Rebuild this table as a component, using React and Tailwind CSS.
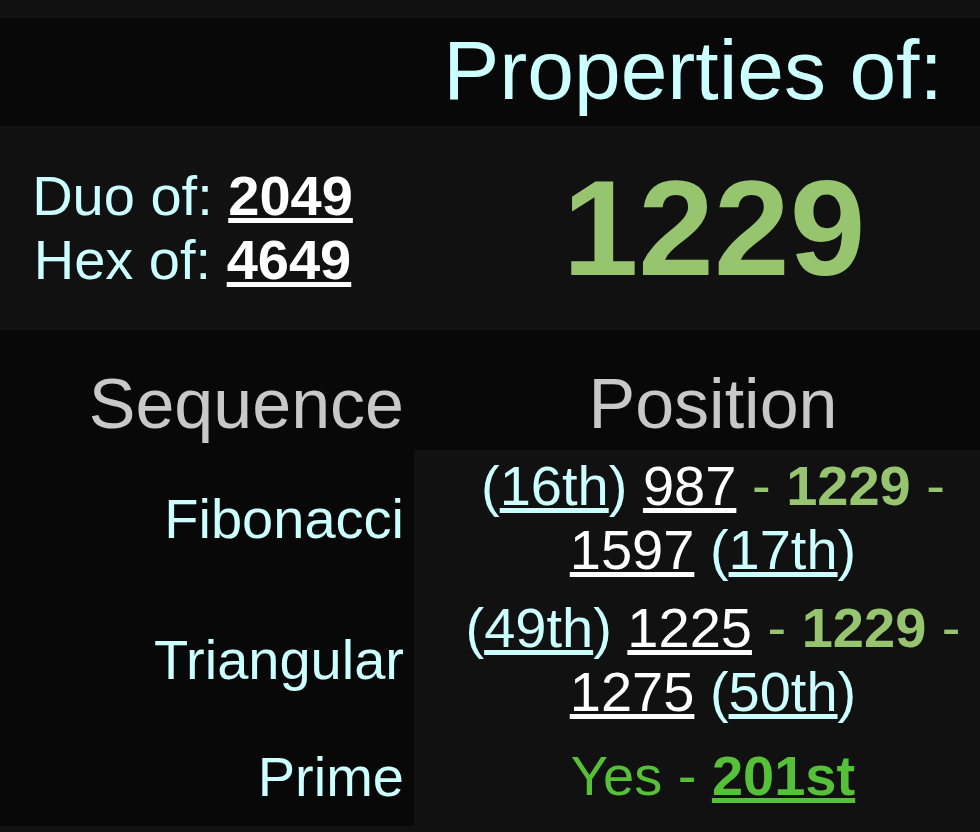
import React from "react";

const cyan = "text-[#ccffff]";
const green = "text-[#97c46f]";

function Pos({ n }) {
  return (
    <span className={cyan}>
      (<span className="underline">{n}</span>)
    </span>
  );
}

function Neighbour({ before, beforePos, after, afterPos }) {
  return (
    <>
      <Pos n={beforePos} /> <span className="text-white underline">{before}</span>{" "}
      <span className={green}>
        - <b>1229</b> -
      </span>{" "}
      <span className="text-white underline">{after}</span> <Pos n={afterPos} />
    </>
  );
}

export default function App() {
  return (
    <div className="min-h-screen bg-[#111] pt-[18px] font-['Liberation_Sans',Arial,sans-serif]">
      {/* title */}
      <div className="flex h-[108px] bg-[#080808]">
        <div className="w-[414px]" />
        <div className="flex-1 pt-[4px] pr-[8px] text-center text-[84px] leading-[96px] text-[#ccffff]">
          Properties of:
        </div>
      </div>

      {/* number */}
      <div className="flex h-[204px] items-center bg-[#111]">
        <div className="w-[385px] text-center text-[56px] leading-[64px] text-[#ccffff]">
          <div>
            Duo of: <b className="text-white underline">2049</b>
          </div>
          <div>
            Hex of: <b className="text-white underline">4649</b>
          </div>
        </div>
        <div className="flex-1 pl-[63px] text-center text-[136px] font-bold leading-[160px] text-[#97c46f]">
          1229
        </div>
      </div>

      {/* table head */}
      <div className="flex h-[120px] bg-[#080808] text-[70px] leading-[80px] text-[#c8c8c8]">
        <div className="w-[414px] pt-[34px] pr-[10px] text-right">Sequence</div>
        <div className="flex-1 pt-[34px] pl-[32px] text-center">Position</div>
      </div>

      {/* rows */}
      <div className="text-[56px] leading-[64px]">
        <div className="flex">
          <div className="flex w-[414px] items-center justify-end bg-[#080808] pr-[10px] text-[#ccffff]">
            Fibonacci
          </div>
          <div className="flex-1 bg-[#111] pt-[4px] pb-[5px] pl-[32px] text-center">
            <Neighbour before="987" beforePos="16th" after="1597" afterPos="17th" />
          </div>
        </div>
        <div className="flex">
          <div className="flex w-[414px] items-center justify-end bg-[#080808] pr-[10px] text-[#ccffff]">
            Triangular
          </div>
          <div className="flex-1 bg-[#111] pt-[9px] pb-[8px] pl-[32px] text-center">
            <Neighbour before="1225" beforePos="49th" after="1275" afterPos="50th" />
          </div>
        </div>
        <div className="flex">
          <div className="flex w-[414px] items-center justify-end bg-[#080808] pr-[10px] pb-[5px] text-[#ccffff]">
            Prime
          </div>
          <div className="flex-1 bg-[#111] pt-[12px] pb-[18px] pl-[32px] text-center text-[#55c038]">
            Yes - <b className="underline">201st</b>
          </div>
        </div>
      </div>
    </div>
  );
}
